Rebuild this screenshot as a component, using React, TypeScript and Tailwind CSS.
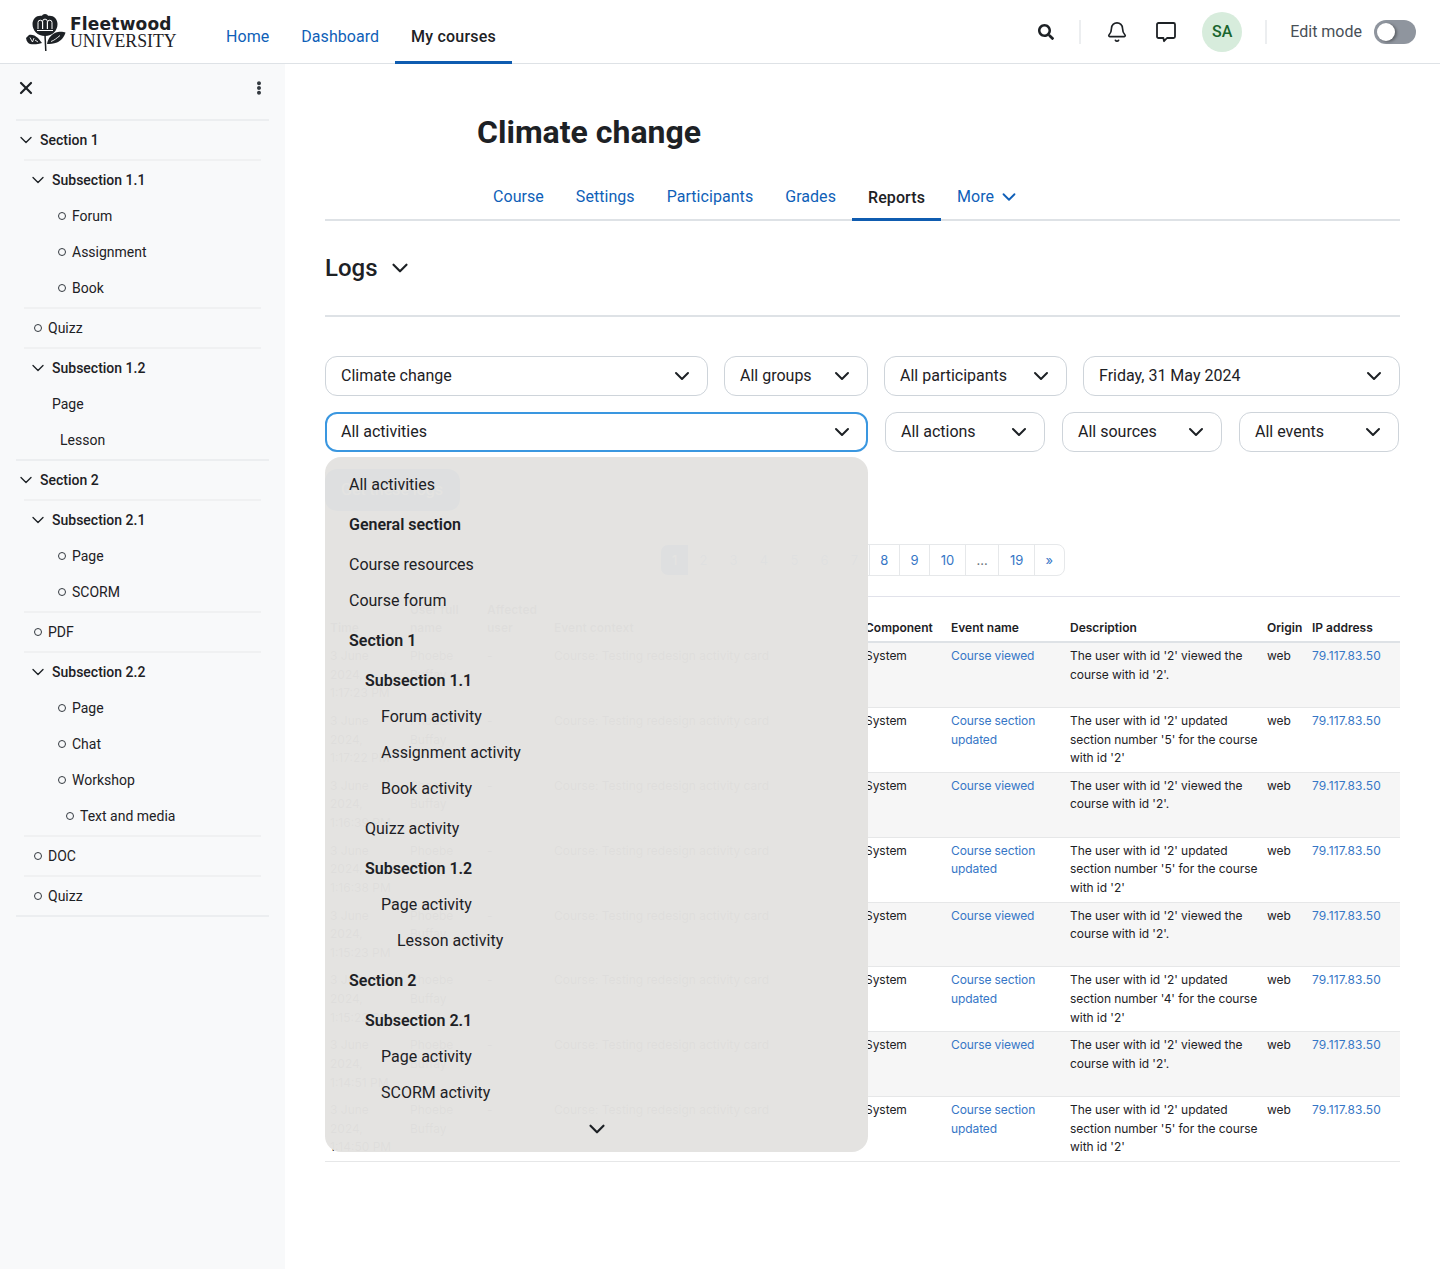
import React from 'react';
import { Bell, ChevronDown, X } from 'lucide-react';
import { FaEllipsisV, FaSearch } from 'react-icons/fa';

type SideRow = {
  label: string;
  kind: 'section' | 'sub' | 'item' | 'leaf';
  pad: string;
  circle?: boolean;
  after?: 'inset' | 'wide';
};

const sideRows: SideRow[] = [
  { label: 'Section 1', kind: 'section', pad: 'pl-0', after: 'inset' },
  { label: 'Subsection 1.1', kind: 'sub', pad: 'pl-[12px]' },
  { label: 'Forum', kind: 'item', pad: 'pl-[42px]', circle: true },
  { label: 'Assignment', kind: 'item', pad: 'pl-[42px]', circle: true },
  { label: 'Book', kind: 'item', pad: 'pl-[42px]', circle: true, after: 'inset' },
  { label: 'Quizz', kind: 'leaf', pad: 'pl-[18px]', circle: true, after: 'inset' },
  { label: 'Subsection 1.2', kind: 'sub', pad: 'pl-[12px]' },
  { label: 'Page', kind: 'item', pad: 'pl-[36px]' },
  { label: 'Lesson', kind: 'item', pad: 'pl-[44px]', after: 'wide' },
  { label: 'Section 2', kind: 'section', pad: 'pl-0', after: 'inset' },
  { label: 'Subsection 2.1', kind: 'sub', pad: 'pl-[12px]' },
  { label: 'Page', kind: 'item', pad: 'pl-[42px]', circle: true },
  { label: 'SCORM', kind: 'item', pad: 'pl-[42px]', circle: true, after: 'inset' },
  { label: 'PDF', kind: 'leaf', pad: 'pl-[18px]', circle: true, after: 'inset' },
  { label: 'Subsection 2.2', kind: 'sub', pad: 'pl-[12px]' },
  { label: 'Page', kind: 'item', pad: 'pl-[42px]', circle: true },
  { label: 'Chat', kind: 'item', pad: 'pl-[42px]', circle: true },
  { label: 'Workshop', kind: 'item', pad: 'pl-[42px]', circle: true },
  { label: 'Text and media', kind: 'item', pad: 'pl-[50px]', circle: true, after: 'inset' },
  { label: 'DOC', kind: 'leaf', pad: 'pl-[18px]', circle: true, after: 'inset' },
  { label: 'Quizz', kind: 'leaf', pad: 'pl-[18px]', circle: true, after: 'wide' },
];

const activityOptions = [
  { label: 'All activities', pad: 'pl-[24px]' },
  { label: 'General section', pad: 'pl-[24px]', bold: true, gap: true },
  { label: 'Course resources', pad: 'pl-[24px]', gap: true },
  { label: 'Course forum', pad: 'pl-[24px]' },
  { label: 'Section 1', pad: 'pl-[24px]', bold: true, gap: true },
  { label: 'Subsection 1.1', pad: 'pl-[40px]', bold: true, gap: true },
  { label: 'Forum activity', pad: 'pl-[56px]' },
  { label: 'Assignment activity', pad: 'pl-[56px]' },
  { label: 'Book activity', pad: 'pl-[56px]' },
  { label: 'Quizz activity', pad: 'pl-[40px]', gap: true },
  { label: 'Subsection 1.2', pad: 'pl-[40px]', bold: true, gap: true },
  { label: 'Page activity', pad: 'pl-[56px]' },
  { label: 'Lesson activity', pad: 'pl-[72px]' },
  { label: 'Section 2', pad: 'pl-[24px]', bold: true, gap: true },
  { label: 'Subsection 2.1', pad: 'pl-[40px]', bold: true, gap: true },
  { label: 'Page activity', pad: 'pl-[56px]' },
  { label: 'SCORM activity', pad: 'pl-[56px]' },
];

const logRows = [
  { time: '1:17:23 PM', section: '' },
  { time: '1:17:22 PM', section: '5' },
  { time: '1:16:39 PM', section: '' },
  { time: '1:16:38 PM', section: '5' },
  { time: '1:15:23 PM', section: '' },
  { time: '1:15:22 PM', section: '4' },
  { time: '1:14:51 PM', section: '' },
  { time: '1:14:50 PM', section: '5' },
];

const pages = ['1', '2', '3', '4', '5', '6', '7', '8', '9', '10', '...', '19', '»'];

const Logo = () => (
  <div className="flex items-center pl-[25px] w-[210px] shrink-0 text-[#1d2125]">
    <svg width="42" height="38" viewBox="0 0 42 38" className="shrink-0 mt-[2px]">
      {/* rose head with crown */}
      <path d="M20 0c1.500 0 2.500.8 3 1.800C28 .8 32.500 4.500 32.500 10c0 6.500-5 12-12.500 12S7.500 16.500 7.500 10C7.500 4.500 12 .8 17 1.800 17.500.8 18.500 0 20 0z" fill="#1d2125" />
      <path d="M13 15V8.500a2.300 2.300 0 0 1 4.600 0V15M17.600 15V7.500a2.400 2.400 0 0 1 4.800 0V15M22.400 15V8.500a2.300 2.300 0 0 1 4.600 0V15M12 16.500h16" fill="none" stroke="#fff" strokeWidth="1" />
      <path d="M20 21l.8 16" stroke="#1d2125" strokeWidth="1.500" fill="none" />
      <path d="M17 29l-4-5c-3-3-7-4-9-3l-3 3c.5 3 2 5.500 4 6 3 .5 8 .5 12-1z" fill="#1d2125" />
      <path d="M5 23.500l2.500 4.500 1.500-4M10 26l3 2" stroke="#fff" strokeWidth="0.900" fill="none" />
      <path d="M22 30c1-6 5-11 11-12 3-.5 6 0 7.500.5-1 4-4.500 8.500-8.500 10-3.500 1.300-7 1.500-10 1.500z" fill="#1d2125" />
      <path d="M26 27.500c3-1 6-3.500 9-6" stroke="#fff" strokeWidth="0.900" fill="none" />
    </svg>
    <div className="flex flex-col ml-[4px] -translate-x-px mt-[3px]">
      <span className="font-['DejaVu_Sans',sans-serif] font-bold text-[17px] leading-[17px] tracking-[0.2px]">Fleetwood</span>
      <span className="font-['Liberation_Serif',serif] text-[17.800px] leading-[17px]">UNIVERSITY</span>
    </div>
  </div>
);

const ChatIcon = () => (
  <svg width="24" height="24" viewBox="0 0 24 24" fill="none" stroke="#1d2125" strokeWidth="1.800" strokeLinejoin="round">
    <path d="M4.500 3h15A1.500 1.500 0 0 1 21 4.500v12a1.500 1.500 0 0 1-1.500 1.500H13l-3 3.200-.6-3.200H4.500A1.500 1.500 0 0 1 3 16.500v-12A1.500 1.500 0 0 1 4.500 3z" />
  </svg>
);

const Header = () => (
  <header className="flex items-stretch h-16 border-b border-[#dee2e6] bg-white shrink-0">
    <Logo />
    <nav className="flex text-base tracking-[0.05px]">
      <a className="flex items-center px-4 pt-[10px] text-[#0f5fb8]">Home</a>
      <a className="flex items-center px-4 pt-[10px] text-[#0f5fb8]">Dashboard</a>
      <a className="flex items-center px-4 pt-[12px] font-medium text-[#1d2125] border-b-[3px] border-[#0f5cb0] -mb-px tracking-[0.2px]">My courses</a>
    </nav>
    <div className="ml-auto flex items-center pr-[24px]">
      <FaSearch size={16} className="text-[#1d2125]" />
      <div className="w-[2px] h-6 bg-[#eceef0] ml-[25px]" />
      <Bell size={22} strokeWidth={1.8} className="text-[#1d2125] ml-[25px]" />
      <div className="ml-[26px]"><ChatIcon /></div>
      <div className="ml-[24px] w-10 h-10 rounded-full bg-[#d7ecdc] text-[#1a652e] font-medium flex items-center justify-center">SA</div>
      <div className="w-[2px] h-6 bg-[#eceef0] ml-[23px]" />
      <span className="ml-[23px] text-[#495057]">Edit mode</span>
      <div className="ml-[12px] w-[42px] h-6 rounded-full bg-[#8f959e] flex items-center pl-[3px]">
        <div className="w-[18px] h-[18px] rounded-full bg-white shadow-[2px_1px_3px_rgba(0,0,0,0.35)]" />
      </div>
    </div>
  </header>
);

const Sidebar = () => (
  <aside className="w-[285px] shrink-0 bg-[#f8f9fa] px-4 text-sm text-[#1d2125]">
    <div className="flex items-center justify-between h-[55px] pr-[3px] pb-[7px] -mb-px">
      <X size={20} strokeWidth={2.6} />
      <FaEllipsisV size={14} className="text-[#343a40]" />
    </div>
    <div className="h-[2px] bg-[#eceef0] mt-px" />
    {sideRows.map((row, i) => {
      const heading = row.kind === 'section' || row.kind === 'sub';
      const height = row.kind === 'item' ? 'h-9' : row.kind === 'sub' ? 'h-[37px]' : 'h-[38px]';
      return (
        <React.Fragment key={i}>
          <div className={`flex items-center ${height} ${row.pad} ${heading ? 'font-medium' : ''}`}>
            {heading && <ChevronDown size={20} strokeWidth={1.6} className="mr-[4px] shrink-0" />}
            {row.circle && <span className="w-2 h-2 rounded-full border border-[#343a40] mr-[6px] shrink-0" />}
            <span>{row.label}</span>
          </div>
          {row.after === 'inset' && <div className={`h-[2px] bg-[#f0f1f2] mx-2 ${row.kind === 'item' ? 'mt-px' : ''}`} />}
          {row.after === 'wide' && <div className={`h-[2px] bg-[#eceef0] ${row.kind === 'item' ? 'mt-px' : ''}`} />}
        </React.Fragment>
      );
    })}
  </aside>
);

const Select = ({ label, width, focus, children }: { label: string; width: string; focus?: boolean; children?: React.ReactNode }) => (
  <div className={`relative shrink-0 ${width}`}>
    <div className={`flex items-center justify-between h-10 rounded-xl bg-white text-[#1d2125] ${focus ? 'border-2 border-[#3a97e0] pl-[14px] pr-[12px]' : 'border border-[#ced4da] pl-[15px] pr-[13px]'}`}>
      <span>{label}</span>
      <ChevronDown size={24} strokeWidth={2} />
    </div>
    {children}
  </div>
);

const ActivityMenu = () => (
  <div className="absolute left-0 top-[45px] z-10 w-full h-[695px] flex flex-col pt-[10px] rounded-2xl bg-[#e3e2e0]/[0.975] text-[#1d2125] overflow-hidden">
    {activityOptions.map((opt, i) => (
      <div key={i} className={`flex items-center h-9 shrink-0 ${opt.pad} ${opt.gap ? 'mt-1' : ''} ${opt.bold ? 'font-semibold' : ''}`}>
        {opt.label}
      </div>
    ))}
    <ChevronDown size={26} strokeWidth={2} className="self-center mt-auto mb-[10px]" />
  </div>
);

const LogTable = () => (
  <table className="w-[1075px] table-fixed border-collapse font-[Inter,sans-serif] text-xs leading-[18.620px] text-[#1d2125]">
    <colgroup>
      <col className="w-[80px]" />
      <col className="w-[77px]" />
      <col className="w-[67px]" />
      <col className="w-[311px]" />
      <col className="w-[86px]" />
      <col className="w-[119px]" />
      <col className="w-[197px]" />
      <col className="w-[45px]" />
      <col className="w-[93px]" />
    </colgroup>
    <thead>
      <tr className="h-[45px] border-b-2 border-[#dee2e6] text-left align-bottom">
        {['Time', 'User full name', 'Affected user', 'Event context', 'Component', 'Event name', 'Description', 'Origin', 'IP address'].map((h) => (
          <th key={h} className="font-semibold px-[5px] pb-[3px] whitespace-normal">{h}</th>
        ))}
      </tr>
    </thead>
    <tbody>
      {logRows.map((row, i) => (
        <tr key={i} className={`border-b border-[#e6e7e8] align-top ${i % 2 === 0 ? 'bg-[#f6f6f6]' : 'bg-white'}`}>
          <td className="px-[5px] py-1">3 June<br />2024,<br />{row.time}</td>
          <td className="px-[5px] py-1">Phoebe<br />Buffay</td>
          <td className="px-[5px] py-1">-</td>
          <td className="px-[5px] py-1">Course: Testing redesign activity card</td>
          <td className="px-[5px] py-1 tracking-[-0.05px]">System</td>
          <td className="px-[5px] py-1 text-[#3676c6] tracking-[-0.1px]">{row.section ? 'Course section updated' : 'Course viewed'}</td>
          <td className="pl-[5px] pr-[2px] py-1 tracking-[-0.05px]">
            {row.section
              ? `The user with id '2' updated section number '${row.section}' for the course with id '2'`
              : "The user with id '2' viewed the course with id '2'."}
          </td>
          <td className="px-[5px] py-1">web</td>
          <td className="px-[5px] py-1 text-[#3676c6] tracking-[0.15px]">79.117.83.50</td>
        </tr>
      ))}
    </tbody>
  </table>
);

const App = () => (
  <div className="min-h-screen flex flex-col bg-white font-[Roboto,sans-serif] text-base text-[#1d2125]">
    <Header />
    <div className="flex flex-1">
      <Sidebar />
      <main className="flex-1 px-10 min-w-0">
        <h1 className="pl-[152px] pt-[46px] text-[32px] leading-[44px] font-bold">Climate change</h1>
        <div className="flex h-[47px] mt-[20px] pl-[152px] border-b-2 border-[#dee2e6] tracking-[0.05px]">
          {['Course', 'Settings', 'Participants', 'Grades'].map((t) => (
            <a key={t} className="flex items-center px-4 text-[#0f5fb8]">{t}</a>
          ))}
          <a className="flex items-center px-4 pt-[3px] font-medium border-b-[3px] border-[#0f5cb0] -mb-[2px] tracking-[0.1px]">Reports</a>
          <a className="flex items-center pl-4 text-[#0f5fb8]">More<ChevronDown size={22} strokeWidth={2} className="ml-[4px]" /></a>
        </div>
        <div className="flex items-center h-[96px] border-b-2 border-[#dee2e6]">
          <h2 className="text-2xl font-medium">Logs</h2>
          <ChevronDown size={26} strokeWidth={2} className="ml-[9px]" />
        </div>
        <div className="flex gap-4 mt-[39px]">
          <Select label="Climate change" width="w-[383px]" />
          <Select label="All groups" width="w-[144px]" />
          <Select label="All participants" width="w-[183px]" />
          <Select label="Friday, 31 May 2024" width="w-[317px]" />
        </div>
        <div className="flex gap-[17px] mt-4">
          <Select label="All activities" width="w-[543px]" focus>
            <ActivityMenu />
          </Select>
          <Select label="All actions" width="w-[160px]" />
          <Select label="All sources" width="w-[160px]" />
          <Select label="All events" width="w-[160px]" />
        </div>
        <button className="block mt-[17px] h-[42px] w-[135px] rounded-xl bg-[#0f6cbf] text-white text-left pl-4">Get these logs</button>
        <div className="flex justify-center mt-[33px]">
          <div className="flex font-[Inter,sans-serif] text-[13px] h-8">
            {pages.map((p, i) => (
              <span
                key={i}
                className={`flex items-center px-[10.600px] pt-px border border-[#e6e8ea] -ml-px first:ml-0 first:rounded-l-lg last:rounded-r-lg ${
                  i === 0 ? 'bg-[#0f6cbf] text-white' : p === '...' ? 'text-[#6a737b]' : 'text-[#3676c6]'
                }`}
              >
                {p}
              </span>
            ))}
          </div>
        </div>
        <div className="h-px bg-[#e1e2ea] mt-[20px]" />
        <LogTable />
      </main>
    </div>
  </div>
);

export default App;
